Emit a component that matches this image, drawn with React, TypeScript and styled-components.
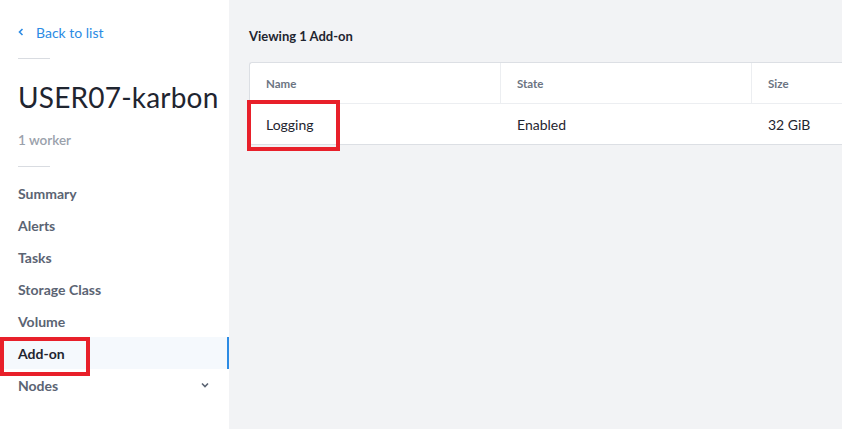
import React from "react";
import styled, { createGlobalStyle } from "styled-components";

const Global = createGlobalStyle`
  html, body { margin: 0; padding: 0; }
  body { font-family: "Lato", "Open Sans", sans-serif; background: #f2f3f5; }
  #root { width: 842px; height: 429px; overflow: hidden; }
`;

const Page = styled.div`
  position: relative;
  display: flex;
  width: 842px;
  height: 429px;
  background: #f2f3f5;
`;

const Sidebar = styled.aside`
  width: 229px;
  flex: none;
  background: #fff;
  display: flex;
  flex-direction: column;
  padding-top: 23px;
  box-sizing: border-box;
`;

const BackLink = styled.a`
  display: flex;
  align-items: center;
  gap: 12px;
  margin-left: 18px;
  height: 18px;
  color: #2b8be4;
  font-size: 14px;
  text-decoration: none;
`;

const Divider = styled.div<{ $mt: number }>`
  width: 32px;
  height: 1px;
  background: #d9dce1;
  margin: ${(p) => p.$mt}px 0 0 18px;
`;

const Title = styled.h1`
  margin: 21px 0 0 18px;
  font-size: 28px;
  font-weight: 400;
  color: #1f2530;
  line-height: 34px;
  letter-spacing: 0.2px;
`;

const Sub = styled.div`
  margin: 17px 0 0 18px;
  font-size: 13.5px;
  color: #9aa1ab;
  font-weight: 600;
  line-height: 18px;
`;

const Nav = styled.nav`
  margin-top: 10px;
  display: flex;
  flex-direction: column;
`;

const NavItem = styled.div<{ $active?: boolean }>`
  height: 32px;
  display: flex;
  align-items: center;
  justify-content: space-between;
  padding: 0 18px;
  font-size: 14px;
  font-weight: 700;
  color: ${(p) => (p.$active ? "#1f2530" : "#5b6473")};
  background: ${(p) => (p.$active ? "#f5f9fd" : "transparent")};
  border-right: 2px solid ${(p) => (p.$active ? "#2b8be4" : "transparent")};
`;

const Main = styled.main`
  flex: 1;
  padding: 27px 0 0 20px;
  display: flex;
  flex-direction: column;
`;

const Heading = styled.div`
  font-size: 13px;
  font-weight: 700;
  color: #1f2530;
  line-height: 18px;
`;

const Table = styled.div`
  margin-top: 17px;
  background: #fff;
  border: 1px solid #dcdfe4;
  border-right: none;
  border-radius: 3px 0 0 3px;
  width: 620px;
`;

const Row = styled.div<{ $header?: boolean }>`
  display: grid;
  grid-template-columns: 251px 251px 1fr;
  height: 40px;
  border-bottom: ${(p) => (p.$header ? "1px solid #eceef1" : "none")};
`;

const Cell = styled.div<{ $header?: boolean; $last?: boolean }>`
  display: flex;
  align-items: center;
  padding-left: 16px;
  font-size: ${(p) => (p.$header ? "11.5px" : "14px")};
  font-weight: ${(p) => (p.$header ? 700 : 400)};
  color: ${(p) => (p.$header ? "#6b7482" : "#1f2530")};
  border-right: ${(p) => (p.$header && !p.$last ? "1px solid #eceef1" : "none")};
`;

const Highlight = styled.div`
  position: absolute;
  border: 4px solid #e8202a;
  box-sizing: border-box;
  pointer-events: none;
`;

const Chevron = () => (
  <svg width="6" height="8" viewBox="0 0 6 8">
    <path d="M4.5 1 L1.5 4 L4.5 7" fill="none" stroke="#2b8be4" strokeWidth="1.6" />
  </svg>
);

const Down = () => (
  <svg width="8" height="6" viewBox="0 0 8 6">
    <path d="M1 1.5 L4 4.5 L7 1.5" fill="none" stroke="#5b6473" strokeWidth="1.6" />
  </svg>
);

const items = ["Summary", "Alerts", "Tasks", "Storage Class", "Volume", "Add-on", "Nodes"];

export default function App() {
  return (
    <>
      <Global />
      <Page>
        <Sidebar>
          <BackLink>
            <Chevron />
            Back to list
          </BackLink>
          <Divider $mt={17} />
          <Title>USER07-karbon</Title>
          <Sub>1 worker</Sub>
          <Divider $mt={17} />
          <Nav>
            {items.map((it) => (
              <NavItem key={it} $active={it === "Add-on"}>
                {it}
                {it === "Nodes" && <Down />}
              </NavItem>
            ))}
          </Nav>
        </Sidebar>
        <Main>
          <Heading>Viewing 1 Add-on</Heading>
          <Table>
            <Row $header>
              <Cell $header>Name</Cell>
              <Cell $header>State</Cell>
              <Cell $header $last>Size</Cell>
            </Row>
            <Row>
              <Cell>Logging</Cell>
              <Cell>Enabled</Cell>
              <Cell>32 GiB</Cell>
            </Row>
          </Table>
        </Main>
        <Highlight style={{ left: 0, top: 337, width: 90, height: 39 }} />
        <Highlight style={{ left: 247, top: 100, width: 93, height: 51 }} />
      </Page>
    </>
  );
}
